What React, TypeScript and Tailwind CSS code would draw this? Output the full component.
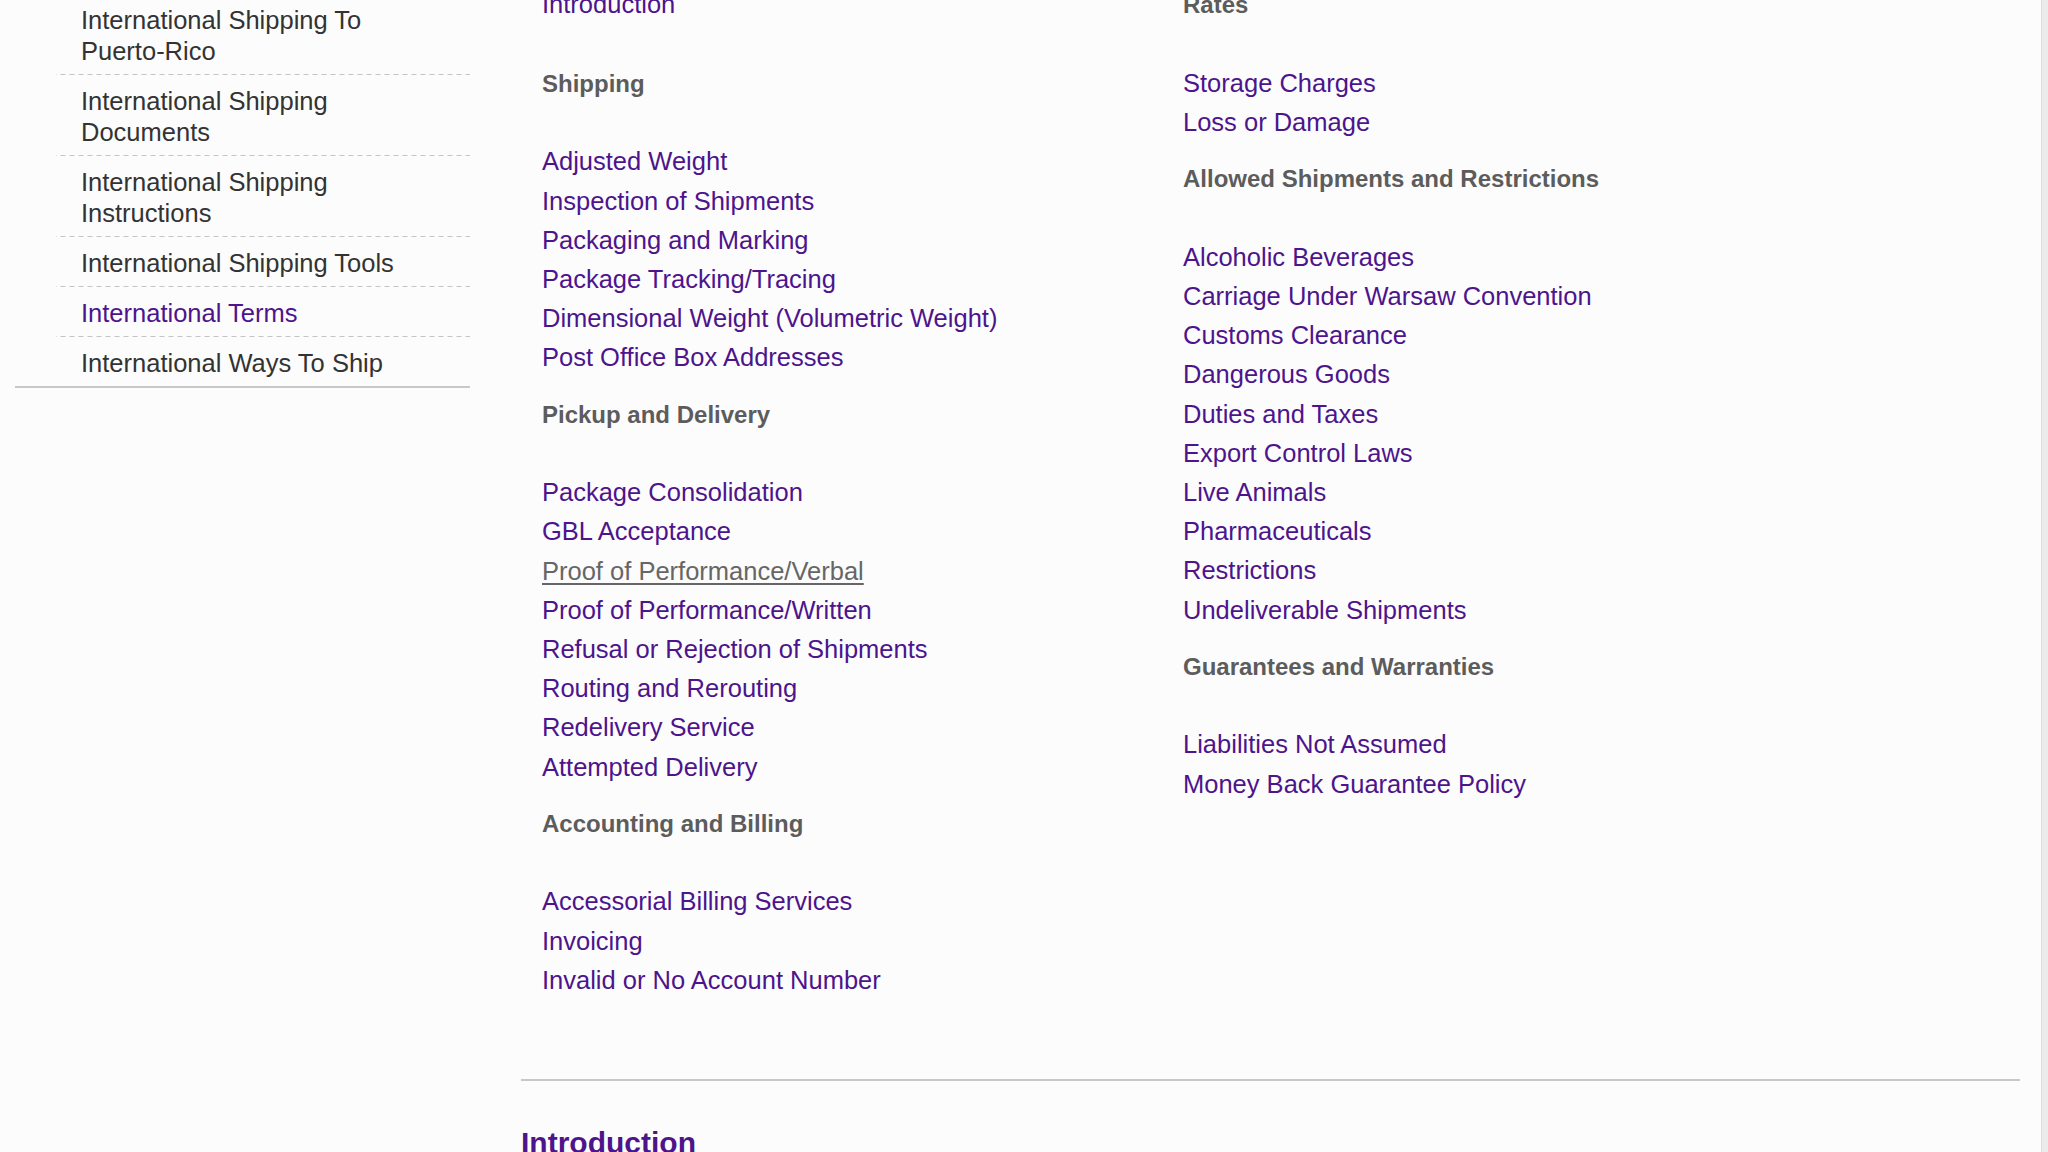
import React from 'react';

type Section = {
  title: string;
  links: string[];
};

const sideItems: { label: string; active?: boolean }[] = [
  { label: 'International Shipping To Puerto-Rico' },
  { label: 'International Shipping Documents' },
  { label: 'International Shipping Instructions' },
  { label: 'International Shipping Tools' },
  { label: 'International Terms', active: true },
  { label: 'International Ways To Ship' },
];

const leftSections: Section[] = [
  {
    title: 'Shipping',
    links: [
      'Adjusted Weight',
      'Inspection of Shipments',
      'Packaging and Marking',
      'Package Tracking/Tracing',
      'Dimensional Weight (Volumetric Weight)',
      'Post Office Box Addresses',
    ],
  },
  {
    title: 'Pickup and Delivery',
    links: [
      'Package Consolidation',
      'GBL Acceptance',
      'Proof of Performance/Verbal',
      'Proof of Performance/Written',
      'Refusal or Rejection of Shipments',
      'Routing and Rerouting',
      'Redelivery Service',
      'Attempted Delivery',
    ],
  },
  {
    title: 'Accounting and Billing',
    links: ['Accessorial Billing Services', 'Invoicing', 'Invalid or No Account Number'],
  },
];

const rightSections: Section[] = [
  {
    title: 'Rates',
    links: ['Storage Charges', 'Loss or Damage'],
  },
  {
    title: 'Allowed Shipments and Restrictions',
    links: [
      'Alcoholic Beverages',
      'Carriage Under Warsaw Convention',
      'Customs Clearance',
      'Dangerous Goods',
      'Duties and Taxes',
      'Export Control Laws',
      'Live Animals',
      'Pharmaceuticals',
      'Restrictions',
      'Undeliverable Shipments',
    ],
  },
  {
    title: 'Guarantees and Warranties',
    links: ['Liabilities Not Assumed', 'Money Back Guarantee Policy'],
  },
];

// the link under the mouse in the screenshot
const hovered = 'Proof of Performance/Verbal';

function LinkList({ links }: { links: string[] }) {
  return (
    <ul>
      {links.map((link) => (
        <li key={link} className="leading-[39.2px]">
          <a
            href="#"
            className={
              link === hovered
                ? 'text-[#666666] underline decoration-[#666666] underline-offset-[3px]'
                : 'text-[#4d148c]'
            }
          >
            {link}
          </a>
        </li>
      ))}
    </ul>
  );
}

function SectionBlock({ section, first }: { section: Section; first?: boolean }) {
  return (
    <div className={first ? '' : 'mt-[17.2px]'}>
      <h3 className="mb-[39.2px] text-[24px] leading-[39.2px] font-bold text-[#5c5c5c]">
        {section.title}
      </h3>
      <LinkList links={section.links} />
    </div>
  );
}

export default function App() {
  return (
    <div className="flex h-[1152px] w-[2048px] overflow-hidden bg-[#fcfcfc] font-['Liberation_Sans',Arial,sans-serif] text-[25.5px]">
      <div className="flex min-w-0 flex-1">
        <aside className="w-[470px] shrink-0 pl-[15px]">
          <ul className="-mt-[6px] border-b-2 border-[#c8c8c8]">
            {sideItems.map((item, i) => {
              const last = i === sideItems.length - 1;
              return (
                <li
                  key={item.label}
                  className={
                    last
                      ? 'ml-[41px] pt-[11px] pb-[7px]'
                      : 'ml-[41px] bg-[linear-gradient(to_right,#c4c4c4_5px,transparent_5px)] bg-[length:9px_1px] bg-bottom bg-repeat-x pt-[11px] pb-[8px]'
                  }
                >
                  <a
                    href="#"
                    className={`block pr-[40px] pl-[25px] leading-[31px] ${
                      item.active ? 'text-[#4d148c]' : 'text-[#333333]'
                    }`}
                  >
                    {item.label}
                  </a>
                </li>
              );
            })}
          </ul>
        </aside>

        <main className="ml-[51px] flex w-[1499px] shrink-0 flex-col">
          <div className="-mt-[14.6px] flex shrink-0 pl-[21px]">
            <div className="w-[641px] shrink-0">
              <LinkList links={['Introduction']} />
              <div className="mt-[39.4px]">
                {leftSections.map((section, i) => (
                  <SectionBlock key={section.title} section={section} first={i === 0} />
                ))}
              </div>
            </div>
            <div className="flex-1">
              {rightSections.map((section, i) => (
                <SectionBlock key={section.title} section={section} first={i === 0} />
              ))}
            </div>
          </div>

          <div className="mt-[79px] h-[2px] shrink-0 bg-[#c8c8c8]" />

          <h2 className="mt-[44px] shrink-0 text-[30px] leading-[36px] font-bold text-[#4d148c]">
            Introduction
          </h2>
        </main>
      </div>

      <div className="w-[7px] shrink-0 border-l border-[#dcdcdc] bg-[#ebebeb]" />
    </div>
  );
}
